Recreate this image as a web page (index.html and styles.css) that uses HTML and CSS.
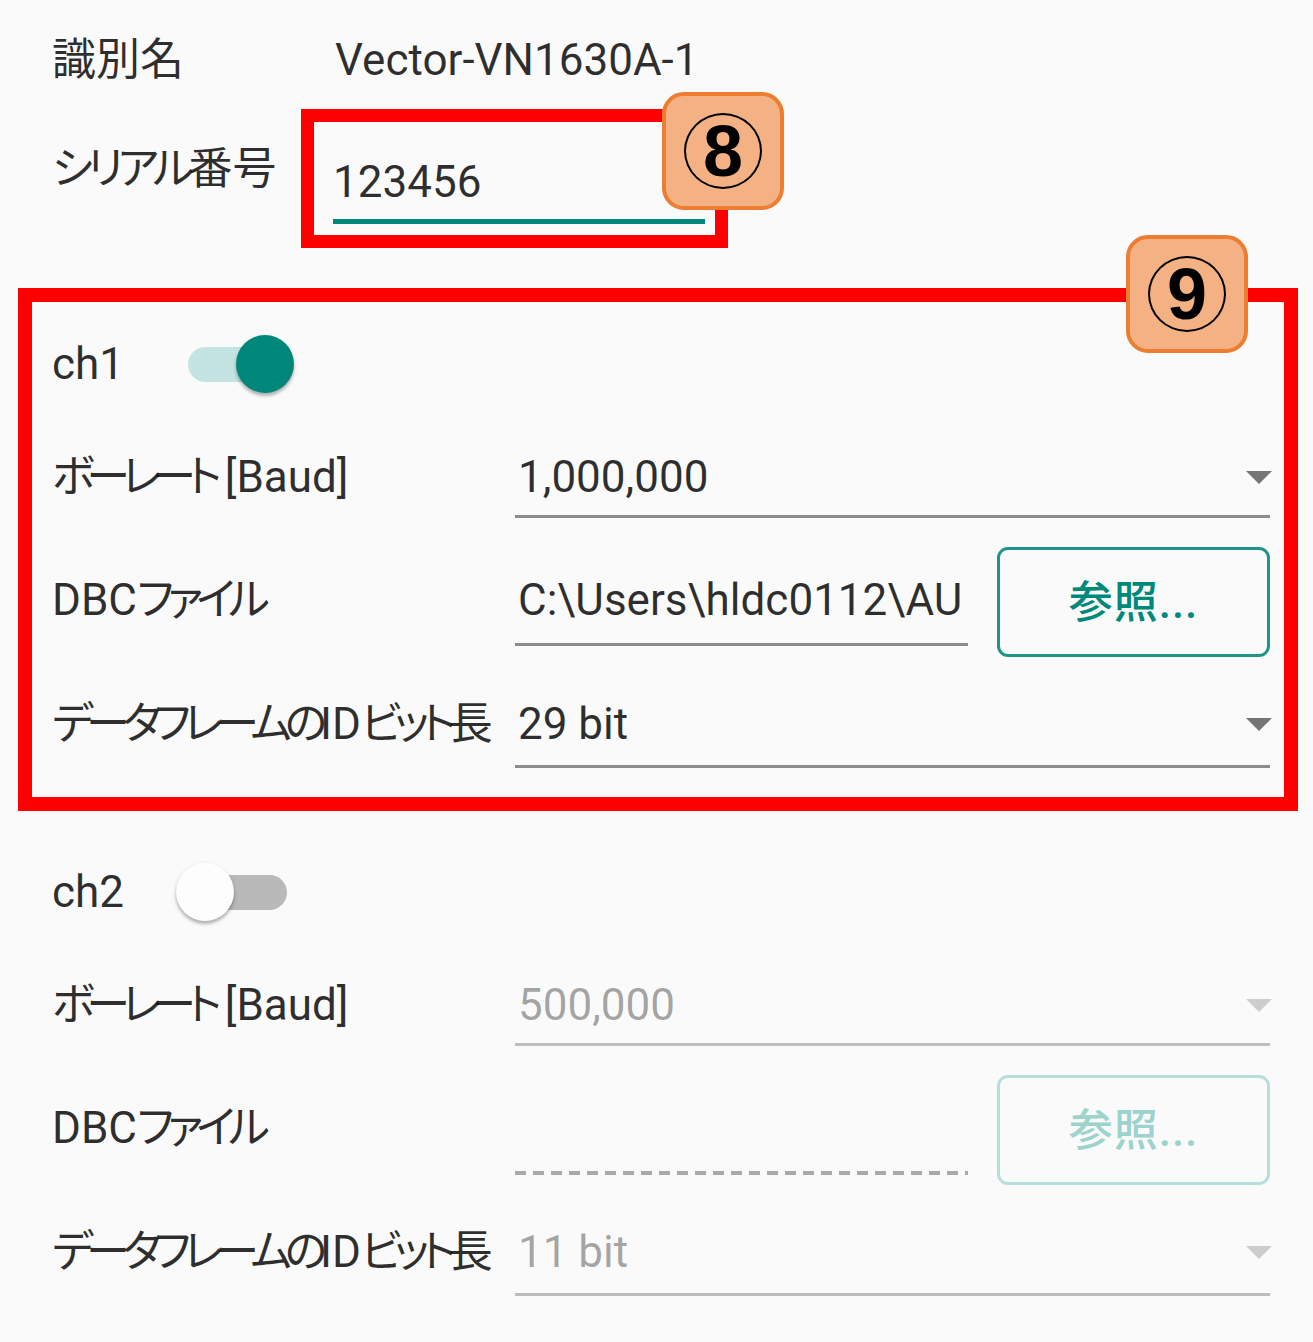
FILE: index.html
```html
<!DOCTYPE html>
<html lang="ja">
<head>
    <meta charset="UTF-8">
    <meta name="viewport" content="width=device-width, initial-scale=1.0">
    <title>デバイス設定</title>
    <link rel="stylesheet" href="styles.css">
</head>
<body>
    <div class="page">
        <!-- Device info -->
        <div class="device">
            <div class="info-row">
                <span class="info-label">識別名</span>
                <span class="info-value">Vector-VN1630A-1</span>
            </div>
            <div class="serial-row">
                <span class="serial-label"><span class="kana k-serial">シリアル</span>番号</span>
                <div class="mark mark-serial">
                    <div class="serial-field">
                        <span class="field-text">123456</span>
                        <div class="line line-active"></div>
                    </div>
                    <span class="badge badge-serial"><span class="badge-num">8</span></span>
                </div>
            </div>
        </div>

        <!-- Channel 1 -->
        <section class="channel marked">
            <span class="badge badge-channel"><span class="badge-num">9</span></span>
            <div class="switch-row">
                <span class="ch-label">ch1</span>
                <span class="switch on"><span class="switch-thumb"></span></span>
            </div>
            <div class="field-row baud-row">
                <span class="field-label"><span class="kana k-baud">ボーレート</span> [Baud]</span>
                <div class="select">
                    <div class="select-value">
                        <span class="field-text">1,000,000</span>
                        <span class="arrow"></span>
                    </div>
                    <div class="line"></div>
                </div>
            </div>
            <div class="field-row dbc-row">
                <span class="field-label">DBC<span class="kana k-file">ファイル</span></span>
                <div class="file-field">
                    <div class="file-text">C:\Users\hldc0112\AU</div>
                    <div class="line"></div>
                </div>
                <button class="btn-browse" type="button">参照...</button>
            </div>
            <div class="field-row id-row">
                <span class="field-label"><span class="kana k-id">データフレームの</span>ID<span class="kana k-id">ビット</span>長</span>
                <div class="select">
                    <div class="select-value">
                        <span class="field-text">29 bit</span>
                        <span class="arrow"></span>
                    </div>
                    <div class="line"></div>
                </div>
            </div>
        </section>

        <!-- Channel 2 (off) -->
        <section class="channel disabled">
            <div class="switch-row">
                <span class="ch-label">ch2</span>
                <span class="switch off"><span class="switch-thumb"></span></span>
            </div>
            <div class="field-row baud-row">
                <span class="field-label"><span class="kana k-baud">ボーレート</span> [Baud]</span>
                <div class="select">
                    <div class="select-value">
                        <span class="field-text">500,000</span>
                        <span class="arrow"></span>
                    </div>
                    <div class="line"></div>
                </div>
            </div>
            <div class="field-row dbc-row">
                <span class="field-label">DBC<span class="kana k-file">ファイル</span></span>
                <div class="file-field">
                    <div class="file-text"></div>
                    <div class="line line-dashed"></div>
                </div>
                <button class="btn-browse" type="button" disabled>参照...</button>
            </div>
            <div class="field-row id-row">
                <span class="field-label"><span class="kana k-id">データフレームの</span>ID<span class="kana k-id">ビット</span>長</span>
                <div class="select">
                    <div class="select-value">
                        <span class="field-text">11 bit</span>
                        <span class="arrow"></span>
                    </div>
                    <div class="line"></div>
                </div>
            </div>
        </section>
    </div>
</body>
</html>
```

FILE: styles.css
```css
body {
    margin: 0;
    background-color: #fafafa;
    color: rgba(0, 0, 0, 0.82);
    font-family: Roboto, "Noto Sans CJK JP", sans-serif;
    font-size: 44px;
    line-height: 44px;
    font-feature-settings: "palt";
}
.page {
    padding: 16px 15px 20px 18px;
}
.device {
    padding-left: 34px;
}
.info-row {
    display: flex;
    align-items: center;
    height: 88px;
}
.info-label {
    width: 283px;
}
.serial-row {
    display: flex;
    align-items: flex-start;
    margin-top: 5px;
}
.serial-label {
    width: 249px;
    margin-top: 38px;
}

/* the Japanese UI font sets kana narrower than kanji */
.kana {
    letter-spacing: -7px;
}
.k-serial {
    letter-spacing: -5.5px;
}
.k-baud {
    letter-spacing: -8px;
}
.k-file {
    letter-spacing: -6.5px;
}
.k-id {
    letter-spacing: -7px;
}

.mark {
    position: relative;
    border: 13px solid #ff0000;
}
.mark-serial {
    box-sizing: border-box;
    width: 427px;
    padding: 38px 10px 11px 19px;
}
.field-text {
    display: block;
    height: 44px;
    white-space: nowrap;
}
.line {
    height: 3px;
    background-color: #8c8c8c;
}
.serial-field .line {
    margin-top: 15px;
}
.line-active {
    height: 5px;
    background-color: #00897b;
}

/* annotation badges */
.badge {
    position: absolute;
    box-sizing: border-box;
    width: 122px;
    height: 118px;
    display: flex;
    align-items: center;
    justify-content: center;
    background-color: #f4b183;
    border: 4px solid #ed7d31;
    border-radius: 22px;
    z-index: 2;
}
.badge-serial {
    left: 348px;
    top: -30px;
}
.badge-channel {
    right: 36px;
    top: -67px;
}
.badge-num {
    box-sizing: border-box;
    width: 78px;
    height: 76px;
    display: flex;
    align-items: center;
    justify-content: center;
    border: 2.5px solid #000;
    border-radius: 50%;
    color: #000;
    font-family: "Liberation Sans", sans-serif;
    font-weight: bold;
    font-size: 72px;
    line-height: 1;
}

/* channel block */
.channel {
    position: relative;
    margin-top: 40px;
    padding: 32px 14px 29px 20px;
    border: 14px solid transparent;
}
.channel.marked {
    border-color: #ff0000;
}
.channel.disabled {
    margin-top: 5px;
}
.switch-row {
    display: flex;
    align-items: center;
    height: 60px;
}
.ch-label {
    width: 136px;
}
.switch {
    position: relative;
    width: 99px;
    height: 35px;
    border-radius: 18px;
}
.switch.on {
    background-color: #c3e4e0;
}
.switch.off {
    background-color: #b9b9b9;
}
.switch-thumb {
    position: absolute;
    top: 50%;
    margin-top: -29px;
    width: 58px;
    height: 58px;
    border-radius: 50%;
    box-shadow: 0 3px 3px rgba(0, 0, 0, 0.2), 0 2px 5px rgba(0, 0, 0, 0.14);
}
.switch.on .switch-thumb {
    left: 48px;
    background-color: #00877a;
}
.switch.off .switch-thumb {
    left: -12px;
    background-color: #fdfdfd;
}
.field-row {
    display: flex;
    align-items: flex-start;
}
.field-label {
    width: 463px;
    flex-shrink: 0;
    white-space: nowrap;
}
.select {
    flex: 1;
}
.select-value {
    display: flex;
    align-items: center;
    justify-content: space-between;
    height: 44px;
    padding-left: 3px;
}
.arrow {
    width: 0;
    height: 0;
    margin-right: -2px;
    border-left: 13px solid transparent;
    border-right: 13px solid transparent;
    border-top: 13px solid #757575;
}
.baud-row {
    margin-top: 61px;
}
.baud-row .line {
    margin-top: 16px;
}
.dbc-row {
    margin-top: 29px;
}
.dbc-row .field-label {
    margin-top: 31px;
}
.file-field {
    width: 453px;
    margin-top: 31px;
}
.file-text {
    height: 44px;
    padding-left: 3px;
    white-space: nowrap;
}
.file-field .line {
    margin-top: 21px;
}
.btn-browse {
    box-sizing: border-box;
    width: 273px;
    height: 110px;
    margin-left: 29px;
    padding-bottom: 8px;
    background-color: transparent;
    border: 3px solid #1f9488;
    border-radius: 11px;
    color: #00897b;
    font-family: Roboto, "Noto Sans CJK JP", sans-serif;
    font-size: 44px;
    font-weight: 500;
    letter-spacing: 1px;
}
.id-row {
    margin-top: 45px;
}
.id-row .line {
    margin-top: 19px;
}

/* switched off channel */
.disabled .field-text {
    color: rgba(0, 0, 0, 0.36);
}
.disabled .arrow {
    border-top-color: #cdcdcd;
}
.disabled .line {
    background-color: #bdbdbd;
}
.disabled .line-dashed {
    height: 4px;
    background: repeating-linear-gradient(to right, #a9a9a9 0, #a9a9a9 11px, transparent 11px, transparent 18px);
}
.btn-browse:disabled {
    border-color: #b5dfda;
    color: #9dd3cd;
}
```
